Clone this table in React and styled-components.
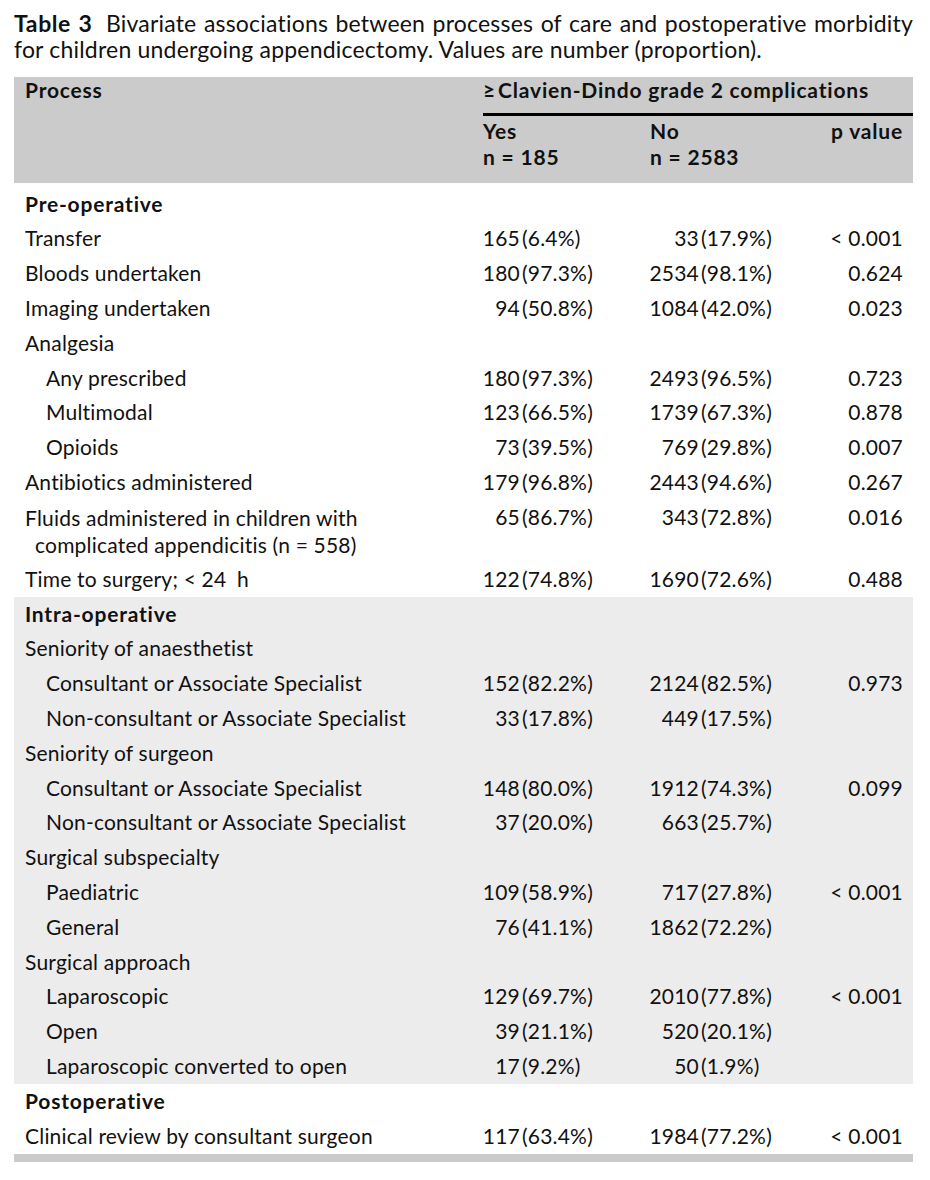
import React from "react";
import styled, { createGlobalStyle } from "styled-components";

const Global = createGlobalStyle`
  html, body { margin: 0; padding: 0; background: #ffffff; }
  body { font-family: Lato, "Open Sans", "Liberation Sans", sans-serif; color: #111; }
`;

const COLS = "469px 167px 180px 83px";

const Page = styled.div`
  width: 899px;
  padding: 10px 0 0 14px;
`;

const Caption = styled.div`
  font-size: 23px;
  line-height: 26px;
  letter-spacing: 0.2px;
`;

const CaptionLine = styled.div`
  text-align: ${(p) => (p.$justify ? "justify" : "left")};
  text-align-last: ${(p) => (p.$justify ? "justify" : "left")};
  white-space: nowrap;
`;

const Label = styled.b`
  font-weight: 700;
  letter-spacing: 0.6px;
  margin-right: 6px;
`;

const Table = styled.div`
  margin-top: 15px;
  font-size: 21px;
  letter-spacing: 0.2px;
`;

const Head = styled.div`
  display: grid;
  grid-template-columns: ${COLS};
  background: #cbcbcb;
  font-weight: 700;
  letter-spacing: 0.8px;
  line-height: 26px;
  padding-bottom: 13.4px;
`;

const HeadProcess = styled.div`
  grid-column: 1;
  grid-row: 1 / span 2;
  padding-left: 11px;
`;

const HeadGroup = styled.div`
  grid-column: 2 / 5;
  grid-row: 1;
  padding-bottom: 10px;
  border-bottom: 3px solid #000;
  white-space: nowrap;
`;

const HeadCell = styled.div`
  grid-row: 2;
  padding-top: 1.6px;
  text-align: ${(p) => (p.$right ? "right" : "left")};
  padding-right: ${(p) => (p.$right ? "10px" : "0")};
  white-space: nowrap;
`;

const Section = styled.div`
  background: ${(p) => (p.$shaded ? "#ececec" : "transparent")};
  padding-top: ${(p) => p.$top || 0}px;
`;

const Row = styled.div`
  display: grid;
  grid-template-columns: ${COLS};
  line-height: 34.8px;
`;

const SectionTitle = styled.div`
  grid-column: 1 / 5;
  padding-left: 11px;
  font-weight: 700;
  letter-spacing: 0.8px;
`;

const Cell = styled.div`
  padding-left: ${(p) => (p.$indent ? 32 : 11)}px;
  white-space: nowrap;
`;

const WrapCell = styled.div`
  line-height: 27px;
  padding: 4px 0 4px 21px;
  text-indent: -10px;
  white-space: nowrap;
`;

const Value = styled.div`
  display: flex;
  white-space: nowrap;
  margin-left: -8px;
`;

const Num = styled.span`
  width: ${(p) => p.$w}px;
  text-align: right;
`;

const Pct = styled.span`
  margin-left: 2px;
`;

const PCell = styled.div`
  text-align: right;
  padding-right: 10px;
  white-space: nowrap;
`;

const BottomBar = styled.div`
  height: 8px;
  margin-top: 1px;
  background: #cbcbcb;
`;

const sections = [
  {
    title: "Pre-operative",
    top: 3.6,
    rows: [
      { label: "Transfer", yes: ["165", "6.4%"], no: ["33", "17.9%"], p: "< 0.001" },
      { label: "Bloods undertaken", yes: ["180", "97.3%"], no: ["2534", "98.1%"], p: "0.624" },
      { label: "Imaging undertaken", yes: ["94", "50.8%"], no: ["1084", "42.0%"], p: "0.023" },
      { label: "Analgesia" },
      { label: "Any prescribed", indent: true, yes: ["180", "97.3%"], no: ["2493", "96.5%"], p: "0.723" },
      { label: "Multimodal", indent: true, yes: ["123", "66.5%"], no: ["1739", "67.3%"], p: "0.878" },
      { label: "Opioids", indent: true, yes: ["73", "39.5%"], no: ["769", "29.8%"], p: "0.007" },
      { label: "Antibiotics administered", yes: ["179", "96.8%"], no: ["2443", "94.6%"], p: "0.267" },
      {
        label: ["Fluids administered in children with", "complicated appendicitis (n = 558)"],
        yes: ["65", "86.7%"],
        no: ["343", "72.8%"],
        p: "0.016",
      },
      { label: "Time to surgery; < 24\u2002h", yes: ["122", "74.8%"], no: ["1690", "72.6%"], p: "0.488" },
    ],
  },
  {
    title: "Intra-operative",
    shaded: true,
    rows: [
      { label: "Seniority of anaesthetist" },
      { label: "Consultant or Associate Specialist", indent: true, yes: ["152", "82.2%"], no: ["2124", "82.5%"], p: "0.973" },
      { label: "Non-consultant or Associate Specialist", indent: true, yes: ["33", "17.8%"], no: ["449", "17.5%"] },
      { label: "Seniority of surgeon" },
      { label: "Consultant or Associate Specialist", indent: true, yes: ["148", "80.0%"], no: ["1912", "74.3%"], p: "0.099" },
      { label: "Non-consultant or Associate Specialist", indent: true, yes: ["37", "20.0%"], no: ["663", "25.7%"] },
      { label: "Surgical subspecialty" },
      { label: "Paediatric", indent: true, yes: ["109", "58.9%"], no: ["717", "27.8%"], p: "< 0.001" },
      { label: "General", indent: true, yes: ["76", "41.1%"], no: ["1862", "72.2%"] },
      { label: "Surgical approach" },
      { label: "Laparoscopic", indent: true, yes: ["129", "69.7%"], no: ["2010", "77.8%"], p: "< 0.001" },
      { label: "Open", indent: true, yes: ["39", "21.1%"], no: ["520", "20.1%"] },
      { label: "Laparoscopic converted to open", indent: true, yes: ["17", "9.2%"], no: ["50", "1.9%"] },
    ],
  },
  {
    title: "Postoperative",
    rows: [
      { label: "Clinical review by consultant surgeon", yes: ["117", "63.4%"], no: ["1984", "77.2%"], p: "< 0.001" },
    ],
  },
];

function ValueCell({ v, w }) {
  if (!v) return <div />;
  return (
    <Value>
      <Num $w={w}>{v[0]}</Num>
      <Pct>({v[1]})</Pct>
    </Value>
  );
}

function DataRow({ row }) {
  return (
    <Row>
      {Array.isArray(row.label) ? (
        <WrapCell>
          {row.label[0]}
          <br />
          {row.label[1]}
        </WrapCell>
      ) : (
        <Cell $indent={row.indent}>{row.label}</Cell>
      )}
      <ValueCell v={row.yes} w={45} />
      <ValueCell v={row.no} w={57} />
      <PCell>{row.p || ""}</PCell>
    </Row>
  );
}

export default function App() {
  return (
    <>
      <Global />
      <Page>
        <Caption>
          <CaptionLine $justify>
            <Label>Table 3</Label> Bivariate associations between processes of care and postoperative morbidity
          </CaptionLine>
          <CaptionLine>for children undergoing appendicectomy. Values are number (proportion).</CaptionLine>
        </Caption>
        <Table>
          <Head>
            <HeadProcess>Process</HeadProcess>
            <HeadGroup>≥&#8202;Clavien-Dindo grade 2 complications</HeadGroup>
            <HeadCell>
              Yes
              <br />n = 185
            </HeadCell>
            <HeadCell>
              No
              <br />n = 2583
            </HeadCell>
            <HeadCell $right>p value</HeadCell>
          </Head>
          {sections.map((s) => (
            <Section key={s.title} $shaded={s.shaded} $top={s.top}>
              <Row>
                <SectionTitle>{s.title}</SectionTitle>
              </Row>
              {s.rows.map((r, i) => (
                <DataRow key={i} row={r} />
              ))}
            </Section>
          ))}
          <BottomBar />
        </Table>
      </Page>
    </>
  );
}
